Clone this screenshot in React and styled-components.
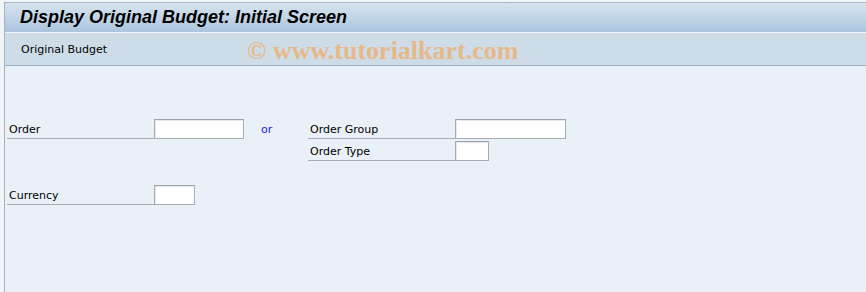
import React from 'react';
import styled, { createGlobalStyle } from 'styled-components';

const GlobalStyle = createGlobalStyle`
  html, body {
    margin: 0;
    padding: 0;
    background: #f2f5f8;
    font-family: Tahoma, "DejaVu Sans", "Liberation Sans", sans-serif;
  }
`;

const Window = styled.div`
  position: relative;
  margin: 2px 0 0 4px;
  height: 290px;
  border-left: 1px solid #a5b3c1;
  display: flex;
  flex-direction: column;
  background: #e9f0f7;
`;

const TitleBar = styled.div`
  height: 29px;
  border-top: 1px solid #a8b4c1;
  background: linear-gradient(#d7e4f0, #acc5dd);
  display: flex;
  align-items: center;
  padding-left: 15px;
`;

const Title = styled.h1`
  margin: 0;
  font-family: "Liberation Sans", Arial, sans-serif;
  font-size: 18px;
  font-weight: bold;
  font-style: italic;
  color: #000;
`;

const Toolbar = styled.div`
  height: 32px;
  border-top: 1px solid #f2f6fa;
  border-bottom: 1px solid #9eb0c2;
  background: #cedce7;
  display: flex;
  align-items: center;
  padding-left: 16px;
  font-family: "DejaVu Sans", sans-serif;
  font-size: 11px;
  color: #000;
`;

const Watermark = styled.div`
  position: absolute;
  left: 242px;
  top: 34px;
  font-family: "Liberation Serif", serif;
  font-weight: bold;
  font-size: 26px;
  color: #e7b889;
  pointer-events: none;
`;

const Body = styled.div`
  flex: 1;
  padding: 53px 0 0 2px;
`;

const Form = styled.div`
  display: grid;
  grid-template-columns: 147px 108px 46px 147px auto;
  grid-template-rows: repeat(4, 20px);
  row-gap: 2px;
  font-family: "DejaVu Sans", sans-serif;
  font-size: 11px;
`;

const Label = styled.div`
  grid-column: ${p => p.col};
  grid-row: ${p => p.row};
  border-bottom: 1px solid #a9abad;
  display: flex;
  align-items: center;
  padding: 1px 0 0 2px;
  color: #000;
`;

const Input = styled.div`
  grid-column: ${p => p.col};
  grid-row: ${p => p.row};
  width: ${p => p.w}px;
  height: 20px;
  box-sizing: border-box;
  background: #fff;
  border: 1px solid #a8adb3;
  border-top-color: #9da3aa;
  box-shadow: inset 1px 1px 0 #e4e8ec;
`;

const Or = styled.div`
  grid-column: 3;
  grid-row: 1;
  margin-left: -1px;
  display: flex;
  align-items: center;
  padding-top: 1px;
  color: #2020e8;
`;

export default function App() {
  return (
    <>
      <GlobalStyle />
      <Window>
        <TitleBar>
          <Title>Display Original Budget: Initial Screen</Title>
        </TitleBar>
        <Toolbar>Original Budget</Toolbar>
        <Watermark>© www.tutorialkart.com</Watermark>
        <Body>
          <Form>
            <Label col={1} row={1}>Order</Label>
            <Input col={2} row={1} w={90} />
            <Or>or</Or>
            <Label col={4} row={1}>Order Group</Label>
            <Input col={5} row={1} w={111} />
            <Label col={4} row={2}>Order Type</Label>
            <Input col={5} row={2} w={34} />
            <Label col={1} row={4}>Currency</Label>
            <Input col={2} row={4} w={41} />
          </Form>
        </Body>
      </Window>
    </>
  );
}
